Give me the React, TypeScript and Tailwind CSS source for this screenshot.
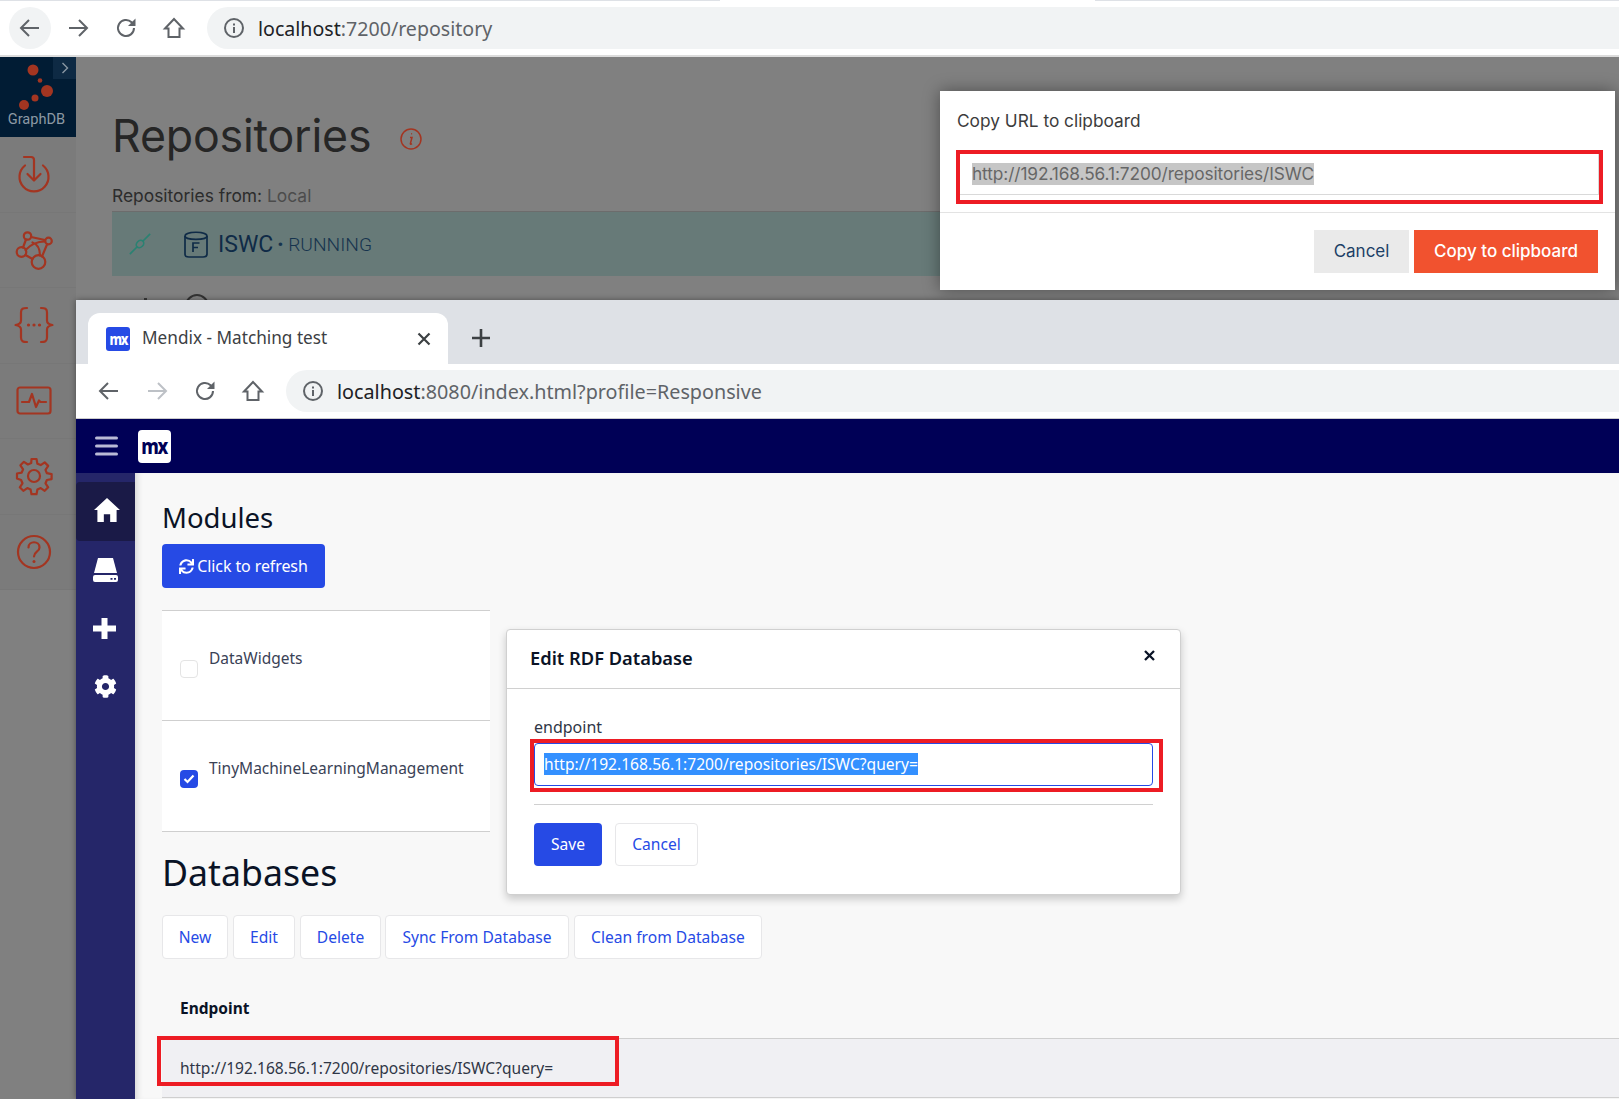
import React from "react";
import { FaCog, FaSync } from "react-icons/fa";

const ChromeIcons = ({ fwdDim = false }: { fwdDim?: boolean }) => (
  <>
    <svg width="24" height="24" viewBox="0 0 24 24" fill="none" stroke="#5f6368" strokeWidth="2" className="shrink-0">
      <path d="M21 12H3.5M11 4l-8 8 8 8" />
    </svg>
    <svg width="24" height="24" viewBox="0 0 24 24" fill="none" stroke={fwdDim ? "#bdc1c6" : "#5f6368"} strokeWidth="2" className="shrink-0">
      <path d="M3 12h17.5M13 4l8 8-8 8" />
    </svg>
    <svg width="24" height="24" viewBox="0 0 24 24" fill="none" className="shrink-0">
      <path d="M20 12a8 8 0 1 1-2.4-5.7L20 8.6" stroke="#5f6368" strokeWidth="2" />
      <path d="M21.5 2.5v7.5H14z" fill="#5f6368" />
    </svg>
    <svg width="24" height="24" viewBox="0 0 24 24" fill="none" stroke="#5f6368" strokeWidth="2" className="shrink-0">
      <path d="M3 12.5 12 3l9 9.5h-3.5V21h-11v-8.5z" />
    </svg>
  </>
);

const InfoCircle = () => (
  <svg width="22" height="22" viewBox="0 0 22 22" fill="none" className="shrink-0">
    <circle cx="11" cy="11" r="9" stroke="#5f6368" strokeWidth="2" />
    <rect x="10" y="10" width="2" height="6" fill="#5f6368" />
    <rect x="10" y="6.5" width="2" height="2" fill="#5f6368" />
  </svg>
);

const RED = "#a33521";

const GdbIcon = ({ children }: { children: React.ReactNode }) => (
  <div className="h-[75.5px] border-b border-[#777] flex items-center justify-center pr-[9px] box-border">
    <svg width="40" height="40" viewBox="0 0 40 40" fill="none" stroke={RED} strokeWidth="2.2" strokeLinecap="round" strokeLinejoin="round">
      {children}
    </svg>
  </div>
);

const GraphDbSidebar = () => (
  <aside className="w-[76px] shrink-0 h-[533px] bg-[#7b7b7b]">
    <div className="h-[80px] bg-[#011c34] relative flex flex-col items-center justify-end pb-[9px] pr-[3px]">
      <div className="absolute right-0 top-0 w-[23px] h-[22px] bg-[#0e2a44] flex items-center justify-center">
        <svg width="10" height="14" viewBox="0 0 10 14" fill="none" stroke="#8a97a3" strokeWidth="1.4">
          <path d="M2.5 2l5 5-5 5" />
        </svg>
      </div>
      <svg width="50" height="50" viewBox="0 0 50 50" className="absolute left-[14px] top-[4px]" fill="#a33521">
        <circle cx="19" cy="9" r="5.5" />
        <circle cx="26" cy="19.5" r="2.3" />
        <circle cx="33" cy="30" r="6" />
        <circle cx="21" cy="37" r="3.5" />
        <circle cx="10" cy="44" r="5" />
      </svg>
      <span className="font-['Roboto',sans-serif] text-[14.6px] leading-[18px] text-[#8c99a4] relative">GraphDB</span>
    </div>
    <GdbIcon>
      <path d="M10 3h7c2 0 3 1 3 3v20" />
      <path d="M13.500 20l6.500 6.500 6.500-6.500" />
      <path d="M11 11.500a14.500 14.500 0 1 0 18 0" />
    </GdbIcon>
    <GdbIcon>
      <circle cx="13.500" cy="6" r="3.700" />
      <circle cx="34.500" cy="11" r="3.300" />
      <circle cx="7.500" cy="22" r="4.800" />
      <circle cx="24.500" cy="32" r="6.800" />
      <path d="M12 9.500 9 17.500M17 7l14 3M11.500 20C18 13 24 11.500 31 11.500M26 25.500C26 19 23 14 18.500 12.500M11.500 25l7 4M28 26.500l5-12" />
    </GdbIcon>
    <GdbIcon>
      <path d="M13 3c-4 0-6 .5-6 4.500v8c0 3-2.500 4-5.500 4.500C4.500 20.500 7 21.500 7 24.500v8c0 4 2 4.500 6 4.500" />
      <path d="M27 3c4 0 6 .5 6 4.500v8c0 3 2.500 4 5.500 4.500-3 .5-5.500 1.500-5.500 4.500v8c0 4-2 4.500-6 4.500" />
      <path d="M14.500 20h.01M20 20h.01M25.500 20h.01" strokeWidth="3.200" />
    </GdbIcon>
    <GdbIcon>
      <rect x="3.500" y="6.500" width="33" height="26" rx="2.500" />
      <path d="M8 21h7l3-8 4 13 3-6.500 1.500 1.500H32" />
    </GdbIcon>
    <GdbIcon>
      <circle cx="20" cy="20" r="6" />
      <path d="M17.500 3h5l.9 4.700 3.300 1.400 4-2.700 3.500 3.500-2.700 4 1.400 3.300 4.700.9v5l-4.700.9-1.400 3.300 2.700 4-3.500 3.500-4-2.700-3.300 1.400-.9 4.700h-5l-.9-4.700-3.300-1.400-4 2.700-3.500-3.500 2.700-4-1.400-3.300L3 22.500v-5l4.700-.9 1.400-3.300-2.700-4 3.500-3.500 4 2.700 3.300-1.400z" />
    </GdbIcon>
    <GdbIcon>
      <circle cx="20" cy="20" r="16" />
      <path d="M14.500 15.500c0-7 11-7 11 0 0 4.500-5.500 4-5.500 9" />
      <path d="M20 29.500h.01" strokeWidth="3" />
    </GdbIcon>
  </aside>
);

const GraphDbContent = () => (
  <main className="flex-1 pl-[36px] pt-[50px] font-['Inter',sans-serif]">
    <div className="flex items-center h-[58px]">
      <h1 className="text-[44.7px] leading-[58px] text-[#262626] font-normal tracking-[-0.2px]">Repositories</h1>
      <svg width="24" height="24" viewBox="0 0 24 24" fill="none" stroke={RED} strokeWidth="1.5" className="ml-[28px] mt-[6px]">
        <circle cx="12" cy="12" r="10" />
        <path d="M11 10.500h2l-1.600 6c-.2.700.5 1 1.600.2M12.200 6.800h.9" />
      </svg>
    </div>
    <div className="mt-[19px] text-[17.4px] leading-[24px] text-[#2c2c2c]">
      Repositories from: <span className="text-[#4c4c4c]">Local</span>
    </div>
    <div className="mt-[3px] w-[830px] h-[65px] bg-[#677a78] border-t border-[#6c6c6c] flex items-center pl-[16px] font-['Roboto',sans-serif]">
      <svg width="24" height="24" viewBox="0 0 26 26" fill="none" stroke="#2a8272" strokeWidth="1.800" className="shrink-0">
        <path d="M2 24l8-8M16 10l8-8" />
        <ellipse cx="13" cy="13" rx="4.500" ry="3.500" transform="rotate(-45 13 13)" />
      </svg>
      <svg width="26" height="28" viewBox="0 0 26 28" fill="none" stroke="#0f2b47" strokeWidth="1.700" className="ml-[31px] shrink-0">
        <path d="M2 6c0-5 22-5 22 0v18c0 3-2 3-4 3H6c-2 0-4 0-4-3z" />
        <path d="M2 6c0 4.500 22 4.500 22 0" />
        <path d="M10 22v-9h6.500M10 17.500h5" />
      </svg>
      <span className="ml-[9px] pt-[1px] text-[23px] leading-[28px] text-[#0f2b47]">ISWC</span>
      <span className="ml-[4px] pt-[1px] text-[19.2px] leading-[28px] font-light text-[#16344e]">• RUNNING</span>
    </div>
    <div className="flex items-start h-[30px] pl-[32px] pt-[18px]">
      <span className="w-[3px] h-[3px] bg-[#3a3a3a] mt-[4px]" />
      <span className="ml-[38px] w-[24px] h-[18px] rounded-t-[12px] border-2 border-[#333]" />
    </div>
  </main>
);

const DialogCopy = () => (
  <div className="absolute left-[940px] top-[91px] w-[675px] h-[199px] bg-white shadow-[0_0_16px_rgba(0,0,0,0.4)] font-['Inter',sans-serif]">
    <div className="pl-[17px] pt-[18px] text-[17.3px] leading-[24px] text-[#3c3c3c]">Copy URL to clipboard</div>
    <div className="ml-[16px] mt-[17px] w-[647px] h-[54px] border-[4px] border-[#ed1c24] box-border">
      <div className="h-[41px] w-[639px] border-b border-r border-[#d9d9d9] pl-[12px] pt-[8px] box-border">
        <span className="inline-block bg-[#c6c6c6] text-[#666] text-[17.3px] leading-[22px] whitespace-nowrap tracking-[-0.1px]">
          http://192.168.56.1:7200/repositories/ISWC
        </span>
      </div>
    </div>
    <div className="mt-[8px] border-t border-[#e3e3e3]" />
    <div className="mt-[17px] flex justify-end gap-[5px] pr-[17px]">
      <div className="w-[95px] h-[43px] bg-[#eaeaea] text-[#1d3f66] text-[17px] flex items-center justify-center">Cancel</div>
      <div className="w-[184px] h-[43px] bg-[#f1522f] text-white text-[17px] font-medium flex items-center justify-center">Copy to clipboard</div>
    </div>
  </div>
);

const MxLogo = ({ cls }: { cls: string }) => (
  <span className={`inline-block scale-x-85 font-['Noto_Sans',sans-serif] font-extrabold tracking-[-1.5px] ${cls}`}>mx</span>
);

const BlueBtn = ({ children, w }: { children: React.ReactNode; w: string }) => (
  <div className={`h-[44px] pt-[1px] ${w} bg-white border border-[#e7e7e9] rounded-[4px] text-[#264ae5] text-[15.6px] flex items-center justify-center whitespace-nowrap`}>
    {children}
  </div>
);

const SideItem = ({ children, cls }: { children: React.ReactNode; cls: string }) => (
  <div className={`h-[59px] flex items-center justify-center ${cls}`}>{children}</div>
);

const MendixSidebar = () => (
  <aside className="w-[59px] shrink-0 bg-[#252669] pt-[9px]">
    <SideItem cls="bg-[#1a1a47] rounded-l-[4px] pl-[2px] pb-[3px]">
      <svg width="26" height="24" viewBox="0 0 27 25" fill="#fff">
        <path d="M13.500 0 27 12.500h-3.500V25h-6.700v-8h-6.600v8H3.500V12.500H0z" />
      </svg>
    </SideItem>
    <SideItem cls="pr-[1px] pb-[1px]">
      <svg width="25" height="24" viewBox="0 0 25 24" fill="#fff">
        <path d="M5 0h15l4 15H1z" />
        <path fillRule="evenodd" d="M2 17h21a2 2 0 0 1 2 2v3a2 2 0 0 1-2 2H2a2 2 0 0 1-2-2v-3a2 2 0 0 1 2-2zm15.500 3v1.800h2V20zm3.500 0v1.800h2V20z" />
      </svg>
    </SideItem>
    <SideItem cls="pr-[2px] pb-[3px]">
      <svg width="23" height="21" viewBox="0 0 23 21" fill="#fff">
        <path d="M8.500 0h6v7.500H23v6h-8.500V21h-6v-7.500H0v-6h8.500z" />
      </svg>
    </SideItem>
    <SideItem cls="pb-[5px]">
      <FaCog size={23} color="#fff" />
    </SideItem>
  </aside>
);

const ModuleRow = ({ label, checked, h }: { label: string; checked?: boolean; h: string }) => (
  <div className={`${h} border-b border-[#cfcfcf] flex items-start pl-[18px] box-border`}>
    {checked ? (
      <span className="mt-[49px] w-[18px] h-[18px] rounded-[4px] bg-[#264ae5] flex items-center justify-center shrink-0">
        <svg width="12" height="10" viewBox="0 0 12 10" fill="none" stroke="#fff" strokeWidth="2.200">
          <path d="M1.500 5l3 3 6-6.500" />
        </svg>
      </span>
    ) : (
      <span className="mt-[49px] w-[18px] h-[18px] rounded-[4px] bg-white border border-[#e4e4e4] shrink-0" />
    )}
    <span className="ml-[11px] mt-[36px] text-[15.5px] leading-[22px] text-[#3a4256] whitespace-nowrap">{label}</span>
  </div>
);

const MendixMain = () => (
  <main className="flex-1 bg-[#f8f8f8] pl-[27px] pt-[27px] font-['Noto_Sans',sans-serif] shadow-[inset_6px_0_6px_-4px_rgba(0,0,0,0.15)] relative">
    <h2 className="text-[27.5px] leading-[36px] text-[#0a1326] font-normal">Modules</h2>
    <div className="mt-[8px] w-[163px] h-[44px] rounded-[4px] bg-[#264ae5] text-white text-[16px] flex items-center justify-center gap-[3px]">
      <FaSync size={15} color="#fff" />
      <span className="tracking-[-0.1px]">Click to refresh</span>
    </div>
    <div className="mt-[22px] w-[328px] bg-white border-t border-[#cfcfcf]">
      <ModuleRow label="DataWidgets" h="h-[110px]" />
      <ModuleRow label="TinyMachineLearningManagement" checked h="h-[111px]" />
    </div>
    <h2 className="mt-[16px] text-[35.7px] leading-[48px] text-[#0a1326] font-normal">Databases</h2>
    <div className="mt-[19px] flex">
      <BlueBtn w="w-[66px]">New</BlueBtn>
      <div className="ml-[5px]"><BlueBtn w="w-[62px]">Edit</BlueBtn></div>
      <div className="ml-[5px]"><BlueBtn w="w-[81px]">Delete</BlueBtn></div>
      <div className="ml-[4px]"><BlueBtn w="w-[184px]">Sync From Database</BlueBtn></div>
      <div className="ml-[5px]"><BlueBtn w="w-[188px]">Clean from Database</BlueBtn></div>
    </div>
    <div className="mt-[39px] ml-[18px] text-[15.5px] leading-[20px] font-bold text-[#0a1326]">Endpoint</div>
    <div className="relative mt-[20px] h-[60px] bg-[#f0f0f3] border-y border-[#cfcfcf] pl-[18px] pt-[17px] text-[15.57px] leading-[24px] text-[#2f3646]">
      http://192.168.56.1:7200/repositories/ISWC?query=
      <div className="absolute left-[-5px] top-[-3px] w-[462px] h-[50px] border-[4px] border-[#ed1c24]" />
    </div>
  </main>
);

const DialogEdit = () => (
  <div className="absolute left-[430px] top-[329px] w-[675px] h-[266px] bg-white border border-[#d0d0d0] rounded-[4px] shadow-[0_4px_8px_rgba(0,0,0,0.2)] font-['Noto_Sans',sans-serif]">
    <div className="h-[59px] border-b border-[#d0d0d0] flex items-start justify-between pl-[23px] pr-[25px]">
      <span className="mt-[16px] text-[18.3px] leading-[24px] font-semibold text-[#0a1326]">Edit RDF Database</span>
      <svg width="11" height="11" viewBox="0 0 11 11" stroke="#0a1326" strokeWidth="2.300" className="mt-[20px]">
        <path d="M1 1l9 9M10 1l-9 9" />
      </svg>
    </div>
    <div className="pl-[27px] pt-[27px] text-[16px] leading-[22px] text-[#2f3646]">endpoint</div>
    <div className="ml-[23px] mt-[1px] w-[633px] h-[53px] border-[4px] border-[#ed1c24] box-border">
      <div className="w-[619px] h-[43px] border border-[#264ae5] rounded-[4px] pl-[9px] pt-[9px]">
        <span className="block w-fit bg-[#3390ff] text-white text-[15.6px] leading-[22px] whitespace-nowrap">
          http://192.168.56.1:7200/repositories/ISWC?query=
        </span>
      </div>
    </div>
    <div className="mx-[27px] mt-[12px] border-t border-[#d0d0d0]" />
    <div className="ml-[27px] mt-[18px] flex gap-[13px]">
      <div className="w-[68px] h-[43px] rounded-[4px] bg-[#264ae5] text-white text-[15.6px] flex items-center justify-center">Save</div>
      <div className="w-[83px] h-[43px] rounded-[4px] bg-white border border-[#e7e7e9] text-[#264ae5] text-[15.6px] flex items-center justify-center">Cancel</div>
    </div>
  </div>
);

const MendixWindow = () => (
  <section className="absolute left-[76px] top-[300px] w-[1543px] h-[799px] overflow-hidden flex flex-col shadow-[0_0_6px_rgba(0,0,0,0.4)]">
    <div className="h-[64px] shrink-0 bg-[#dee1e6] flex items-end pl-[12px] font-['Noto_Sans',sans-serif]">
      <div className="w-[360px] h-[51px] bg-white rounded-t-[12px] flex items-center pl-[18px] pr-[17px]">
        <span className="w-[24px] h-[24px] rounded-[3px] bg-[#264ae5] flex items-center justify-center text-white shrink-0">
          <MxLogo cls="text-[15px] leading-[24px]" />
        </span>
        <span className="ml-[12px] mb-[2px] text-[17.2px] text-[#3c4043] whitespace-nowrap flex-1">Mendix - Matching test</span>
        <svg width="14" height="14" viewBox="0 0 14 14" stroke="#3c4043" strokeWidth="2.200">
          <path d="M1.500 1.500l11 11M12.500 1.500l-11 11" />
        </svg>
      </div>
      <svg width="18" height="18" viewBox="0 0 18 18" stroke="#3c4043" strokeWidth="2.600" className="ml-[24px] mb-[17px]">
        <path d="M9 0v18M0 9h18" />
      </svg>
    </div>
    <div className="h-[55px] shrink-0 bg-white border-b border-[#ccc] flex items-center pl-[21px] gap-[24px]">
      <ChromeIcons fwdDim />
      <div className="ml-[-3px] flex-1 h-[42px] rounded-l-[21px] bg-[#f1f3f4] flex items-center pl-[16px] font-['Noto_Sans',sans-serif] text-[19.75px]">
        <InfoCircle />
        <span className="ml-[13px] pt-[1px] text-[#202124]">localhost</span>
        <span className="pt-[1px] text-[#5f6368]">:8080/index.html?profile=Responsive</span>
      </div>
    </div>
    <div className="h-[54px] shrink-0 bg-[#000056] flex items-center pl-[19px]">
      <svg width="24" height="20" viewBox="0 0 24 20" fill="#b9bad6">
        <rect width="23" height="3" rx="1.500" y="0.500" />
        <rect width="23" height="3" rx="1.500" y="8.500" />
        <rect width="23" height="3" rx="1.500" y="16.500" />
      </svg>
      <span className="ml-[19px] w-[33px] h-[33px] rounded-[4px] bg-white flex items-center justify-center text-[#000056]">
        <MxLogo cls="text-[21px] leading-[33px]" />
      </span>
    </div>
    <div className="flex-1 flex min-h-0">
      <MendixSidebar />
      <MendixMain />
    </div>
    <DialogEdit />
  </section>
);

export default function App() {
  return (
    <div className="relative w-[1619px] h-[1099px] overflow-hidden bg-[#808080]">
      <header className="h-[57px] bg-white border-b-2 border-[#dcdcdc] box-border">
        <div className="relative h-[55px] flex items-center pl-[18px] gap-[24px]">
          <div className="absolute left-0 right-0 top-0 h-[1px] bg-[#dee1e6]" />
          <div className="absolute left-[720px] w-[375px] top-0 h-[1px] bg-white" />
          <span className="absolute left-[9px] top-[7px] w-[42px] h-[42px] rounded-full bg-[#f1f3f4]" />
          <div className="relative flex items-center gap-[24px]">
            <ChromeIcons />
          </div>
          <div className="relative ml-[-3px] flex-1 h-[42px] rounded-l-[21px] bg-[#f1f3f4] flex items-center pl-[16px] font-['Noto_Sans',sans-serif] text-[19.6px]">
            <InfoCircle />
            <span className="ml-[13px] pt-[2px] text-[#202124]">localhost</span>
            <span className="pt-[2px] text-[#5f6368]">:7200/repository</span>
          </div>
        </div>
      </header>
      <div className="flex">
        <GraphDbSidebar />
        <GraphDbContent />
      </div>
      <DialogCopy />
      <MendixWindow />
    </div>
  );
}
